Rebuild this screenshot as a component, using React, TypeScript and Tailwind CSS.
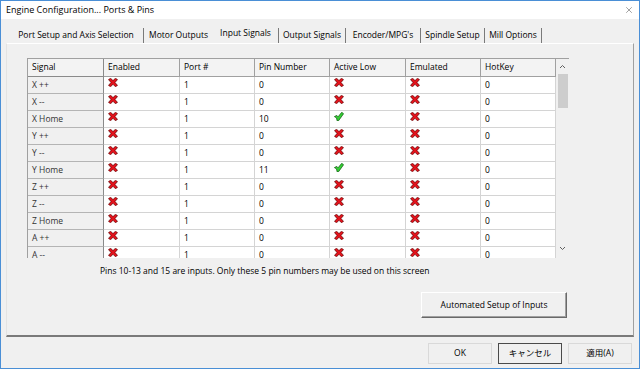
import { X } from "lucide-react";

const font = { fontFamily: '"Open Sans", "Noto Sans CJK JP", sans-serif' };

type Row = {
    signal: string;
    enabled: boolean;
    port: string;
    pin: string;
    activeLow: boolean;
    emulated: boolean;
    hotkey: string;
};

const rows: Row[] = [
    { signal: "X ++", enabled: false, port: "1", pin: "0", activeLow: false, emulated: false, hotkey: "0" },
    { signal: "X --", enabled: false, port: "1", pin: "0", activeLow: false, emulated: false, hotkey: "0" },
    { signal: "X Home", enabled: false, port: "1", pin: "10", activeLow: true, emulated: false, hotkey: "0" },
    { signal: "Y ++", enabled: false, port: "1", pin: "0", activeLow: false, emulated: false, hotkey: "0" },
    { signal: "Y --", enabled: false, port: "1", pin: "0", activeLow: false, emulated: false, hotkey: "0" },
    { signal: "Y Home", enabled: false, port: "1", pin: "11", activeLow: true, emulated: false, hotkey: "0" },
    { signal: "Z ++", enabled: false, port: "1", pin: "0", activeLow: false, emulated: false, hotkey: "0" },
    { signal: "Z --", enabled: false, port: "1", pin: "0", activeLow: false, emulated: false, hotkey: "0" },
    { signal: "Z Home", enabled: false, port: "1", pin: "0", activeLow: false, emulated: false, hotkey: "0" },
    { signal: "A ++", enabled: false, port: "1", pin: "0", activeLow: false, emulated: false, hotkey: "0" },
    { signal: "A --", enabled: false, port: "1", pin: "0", activeLow: false, emulated: false, hotkey: "0" },
];

const tabs = [
    { label: "Port Setup and Axis Selection", w: "w-[135px]", sep: true },
    { label: "Motor Outputs", w: "w-[69px]", sep: false },
    { label: "Input Signals", w: "w-[66px]", sep: true, active: true },
    { label: "Output Signals", w: "w-[67px]", sep: true },
    { label: "Encoder/MPG's", w: "w-[75px]", sep: true },
    { label: "Spindle Setup", w: "w-[64px]", sep: true },
    { label: "Mill Options", w: "w-[57px]", sep: true },
];

const headers = ["Signal", "Enabled", "Port #", "Pin Number", "Active Low", "Emulated", "HotKey"];

function Cross() {
    return (
        <svg width="10" height="9" viewBox="0 0 10 9">
            <polygon
                points="0.5,1.6 2.6,0.3 5,2.6 7.4,0.3 9.5,1.6 7,4.5 9.5,7.4 7.4,8.7 5,6.3 2.6,8.7 0.5,7.4 3,4.5"
                fill="#e3121b"
                stroke="#5a0000"
                strokeWidth="0.7"
                strokeLinejoin="round"
            />
        </svg>
    );
}

function Check() {
    return (
        <svg width="10" height="9" viewBox="0 0 10 9">
            <polygon
                points="0.4,4.6 2.8,3.4 4,4.9 7.7,0.3 9.6,1.7 4.6,8.7 3,8.7 2.6,6"
                fill="#35cf35"
                stroke="#0b560b"
                strokeWidth="0.7"
                strokeLinejoin="round"
            />
        </svg>
    );
}

function Flag({ on }: { on: boolean }) {
    return (
        <div className="flex h-full items-start border-b border-r border-[#d4d4d4] bg-white pl-[4px] pt-[1px]">
            {on ? <Check /> : <Cross />}
        </div>
    );
}

function Text({ children }: { children: string }) {
    return (
        <div className="flex h-full items-center border-b border-r border-[#d4d4d4] bg-white pl-[4px]">
            {children}
        </div>
    );
}

export default function App() {
    return (
        <div
            className="flex h-[369px] w-[640px] flex-col border border-[#4a8fd6] bg-[#f0f0f0] text-[8.5px] text-black"
            style={font}
        >
            {/* title bar */}
            <div className="flex h-[18px] items-center justify-between bg-white pl-[5px] pr-[5px]">
                <span className="text-[9px]">Engine Configuration... Ports &amp; Pins</span>
                <X size={10} strokeWidth={1.1} className="text-[#333]" />
            </div>

            <div className="flex flex-1 flex-col px-[5px]">
                {/* tabs */}
                <div className="mt-[7px] flex h-[17px] items-end pl-[3px]">
                    {tabs.map((t) => (
                        <div
                            key={t.label}
                            className={`${t.w} flex h-[15px] items-center justify-center ${t.sep ? "border-r border-[#7a7a7a]" : ""} ${t.active ? "pb-[4px]" : ""}`}
                        >
                            <span className="whitespace-nowrap">{t.label}</span>
                        </div>
                    ))}
                </div>

                {/* tab panel */}
                <div className="h-[294px] border-b-2 border-l border-r border-t border-b-[#7a7a7a] border-l-[#e3e3e3] border-r-[#a0a0a0] border-t-white pl-[20px] pt-[14px]">
                    <div className="flex h-[200px] w-[542px] overflow-hidden border-l border-t border-[#a0a0a0]">
                        <div className="w-[528px]">
                            <div className="grid h-[18px] grid-cols-[76px_76px_75px_75px_76px_75px_75px]">
                                {headers.map((h, i) => (
                                    <div
                                        key={h}
                                        className={`flex items-center border-b border-r pl-[4px] ${i === 0 ? "border-[#8a8a8a]" : "border-[#a0a0a0]"} bg-[#f3f3f3]`}
                                    >
                                        {h}
                                    </div>
                                ))}
                            </div>
                            {rows.map((r) => (
                                <div
                                    key={r.signal}
                                    className="grid h-[17px] grid-cols-[76px_76px_75px_75px_76px_75px_75px]"
                                >
                                    <div className="flex items-center border-b border-r border-b-[#b4b4b4] border-r-[#8a8a8a] bg-[#f0f0f0] pl-[4px] text-[#333]">
                                        {r.signal}
                                    </div>
                                    <Flag on={r.enabled} />
                                    <Text>{r.port}</Text>
                                    <Text>{r.pin}</Text>
                                    <Flag on={r.activeLow} />
                                    <Flag on={r.emulated} />
                                    <Text>{r.hotkey}</Text>
                                </div>
                            ))}
                        </div>

                        {/* scrollbar */}
                        <div className="flex w-[13px] flex-col items-center bg-[#f0f0f0]">
                            <svg width="7" height="12" viewBox="0 0 7 12" className="mt-[3px]">
                                <polyline points="1,6 3.5,3.5 6,6" fill="none" stroke="#606060" strokeWidth="1" />
                            </svg>
                            <div className="ml-[1px] h-[34px] w-[10px] bg-[#cdcdcd]" />
                            <div className="flex-1" />
                            <svg width="7" height="12" viewBox="0 0 7 12" className="mb-[3px]">
                                <polyline points="1,4 3.5,6.5 6,4" fill="none" stroke="#606060" strokeWidth="1" />
                            </svg>
                        </div>
                    </div>

                    <div className="ml-[73px] mt-[7px] h-[12px] leading-[12px]">
                        Pins 10-13 and 15 are inputs. Only these 5 pin numbers may be used on this screen
                    </div>

                    <div className="mt-[15px] flex w-[542px] justify-end">
                        <button
                            type="button"
                            className="mr-[2px] h-[26px] w-[146px] border-b border-l border-r border-t border-b-[#696969] border-l-white border-r-[#696969] border-t-white bg-[#f0f0f0] shadow-[inset_-1px_-1px_0_#a0a0a0]"
                        >
                            Automated Setup of Inputs
                        </button>
                    </div>
                </div>

                {/* dialog buttons */}
                <div className="mt-[6px] flex justify-end gap-[6px] pr-[2px]">
                    <button type="button" className="h-[21px] w-[64px] border border-[#d9d9d9] bg-[#f0f0f0]">
                        OK
                    </button>
                    <button type="button" className="h-[21px] w-[64px] border border-[#4a4a4a] bg-[#f0f0f0]">
                        キャンセル
                    </button>
                    <button type="button" className="h-[21px] w-[64px] border border-[#d9d9d9] bg-[#f0f0f0]">
                        適用(A)
                    </button>
                </div>
            </div>
        </div>
    );
}
